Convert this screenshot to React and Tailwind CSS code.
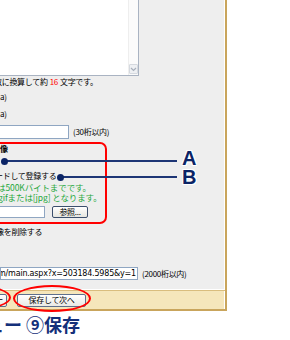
import React from "react";

export default function App() {
  return (
    <div className="relative w-[290px] h-[340px] overflow-hidden bg-white font-['Noto_Sans_CJK_JP',sans-serif] text-[8px] leading-none text-black tracking-[-0.3px]">
      {/* main gray panel */}
      <div className="w-[227px] h-[289px] border-r-2 border-[#c9a55c]">
        <div className="h-full bg-[#eeeeee] border-r border-white flex flex-col">
          {/* textarea */}
          <div className="w-[139px] h-[76px] bg-white border-r border-b border-[#a9b3c2] flex justify-end">
            <div className="w-[10px] h-full bg-[#fbfbfb] border-l border-[#eeeeee] flex flex-col justify-end pb-[1px]">
              <div className="w-[9px] h-[10px] bg-[#eef0f3] border border-[#d5d9df] rounded-[1px] flex items-center justify-center">
                <svg width="7" height="5" viewBox="0 0 7 5">
                  <path d="M1 1 L3.5 3.5 L6 1" fill="none" stroke="#a7afbb" strokeWidth="1.2" />
                </svg>
              </div>
            </div>
          </div>
          {/* char count */}
          <div className="h-[12px] flex items-center -ml-[6px] whitespace-nowrap">
            数に換算して約 <span className="text-[#ff0000] mx-[2px]">16</span> 文字です。
          </div>
          <div className="h-[18px] flex items-center whitespace-nowrap">a)</div>
          <div className="h-[16px] flex items-center whitespace-nowrap">a)</div>
          {/* input row */}
          <div className="h-[20px] flex items-start pt-[3px] -ml-[10px] whitespace-nowrap">
            <div className="w-[79px] h-[14px] bg-white border border-[#8fa6c2]" />
            <span className="ml-[4px] mt-[3px]">(30桁以内)</span>
          </div>
          {/* red box */}
          <div className="-ml-[10px] w-[117px] h-[82px] border-2 border-[#ff0000] rounded-r-[7px] pl-[8px] flex flex-col">
            <div className="h-[10px] flex items-center font-bold whitespace-nowrap">像</div>
            <div className="h-[16px]" />
            <div className="h-[12px] flex items-center -ml-[5px] whitespace-nowrap">ードして登録する</div>
            <div className="h-[10px] flex items-center -ml-[3px] text-[8.5px] tracking-[-0.1px] text-[#1fa83c] whitespace-nowrap">は500Kバイトまでです。</div>
            <div className="h-[10px] flex items-center -ml-[2px] text-[8.5px] tracking-[-0.1px] text-[#1fa83c] whitespace-nowrap">gifまたは[jpg] となります。</div>
            <div className="h-[20px] flex items-start pt-[4px] -ml-[8px] whitespace-nowrap">
              <div className="w-[53px] h-[12px] bg-white border border-[#8fa6c2]" />
              <div className="ml-[7px] w-[36px] h-[12px] rounded-[2px] border border-[#3c4f6d] bg-[linear-gradient(#ffffff,#e6e6e0)] flex items-center justify-center">参照...</div>
            </div>
          </div>
          <div className="h-[16px] flex items-center -ml-[4px] whitespace-nowrap">像を削除する</div>
          <div className="h-[27px]" />
          {/* url row */}
          <div className="h-[13px] flex items-center whitespace-nowrap">
            <div className="w-[138px] h-[13px] bg-white border border-[#8fa6c2] flex items-center justify-end overflow-hidden pr-[1px] font-['DejaVu_Sans',sans-serif] text-[8px] tracking-[-0.2px]">
              <span className="whitespace-nowrap">http://www.example.zm/main.aspx?x=503184.5985&amp;y=1</span>
            </div>
            <span className="ml-[4px]">(2000桁以内)</span>
          </div>
        </div>
      </div>
      {/* button bar */}
      <div className="w-[227px] h-[22px] border-r-2 border-[#c9a55c]">
        <div className="h-full flex flex-col">
          <div className="h-[1px] bg-white" />
          <div className="h-[1px] bg-[#d9bd7e]" />
          <div className="h-[18px] bg-[#f5e6bb] border-r border-white flex items-center">
            <div className="-ml-[30px] w-[37px] h-[13px] rounded-[2px] border border-[#5d6f8c] bg-[linear-gradient(#ffffff,#e9e9e4)] flex items-center justify-end pr-[3px]">ー</div>
            <div className="ml-[10px] w-[69px] h-[13px] rounded-[2px] border border-[#5d6f8c] bg-[linear-gradient(#ffffff,#e9e9e4)] flex items-center justify-center whitespace-nowrap">保存して次へ</div>
          </div>
          <div className="h-[2px] bg-[#c9a55c]" />
        </div>
      </div>
      {/* heading */}
      <div className="mt-[4px] -ml-[14px] text-[18px] font-bold tracking-normal text-[#14307a] whitespace-nowrap">
        ュー ⑨保存
      </div>

      {/* annotations */}
      <div className="absolute left-[4px] top-[160px] w-[173px] h-[2px] bg-[#1d3575]" />
      <div className="absolute left-[60px] top-[176px] w-[117px] h-[2px] bg-[#1d3575]" />
      <div className="absolute left-[1px] top-[158px] w-[7px] h-[7px] rounded-full bg-[#0b2466]" />
      <div className="absolute left-[57px] top-[174px] w-[7px] h-[7px] rounded-full bg-[#0b2466]" />
      <div className="absolute left-[182px] top-[149px] leading-[18px] font-['Liberation_Sans',sans-serif] text-[20px] font-bold tracking-normal text-[#0b2466] [text-shadow:1px_1px_0_#fff,-1px_-1px_0_#fff,1px_-1px_0_#fff,-1px_1px_0_#fff]">A</div>
      <div className="absolute left-[182px] top-[168px] leading-[18px] font-['Liberation_Sans',sans-serif] text-[20px] font-bold tracking-normal text-[#0b2466] [text-shadow:1px_1px_0_#fff,-1px_-1px_0_#fff,1px_-1px_0_#fff,-1px_1px_0_#fff]">B</div>
      <div className="absolute left-[13px] top-[285px] w-[78px] h-[27px] rounded-[50%] border-2 border-[#ff0000]" />
      <div className="absolute -left-[60px] top-[285px] w-[71px] h-[25px] rounded-[50%] border-2 border-[#ff0000]" />
    </div>
  );
}
